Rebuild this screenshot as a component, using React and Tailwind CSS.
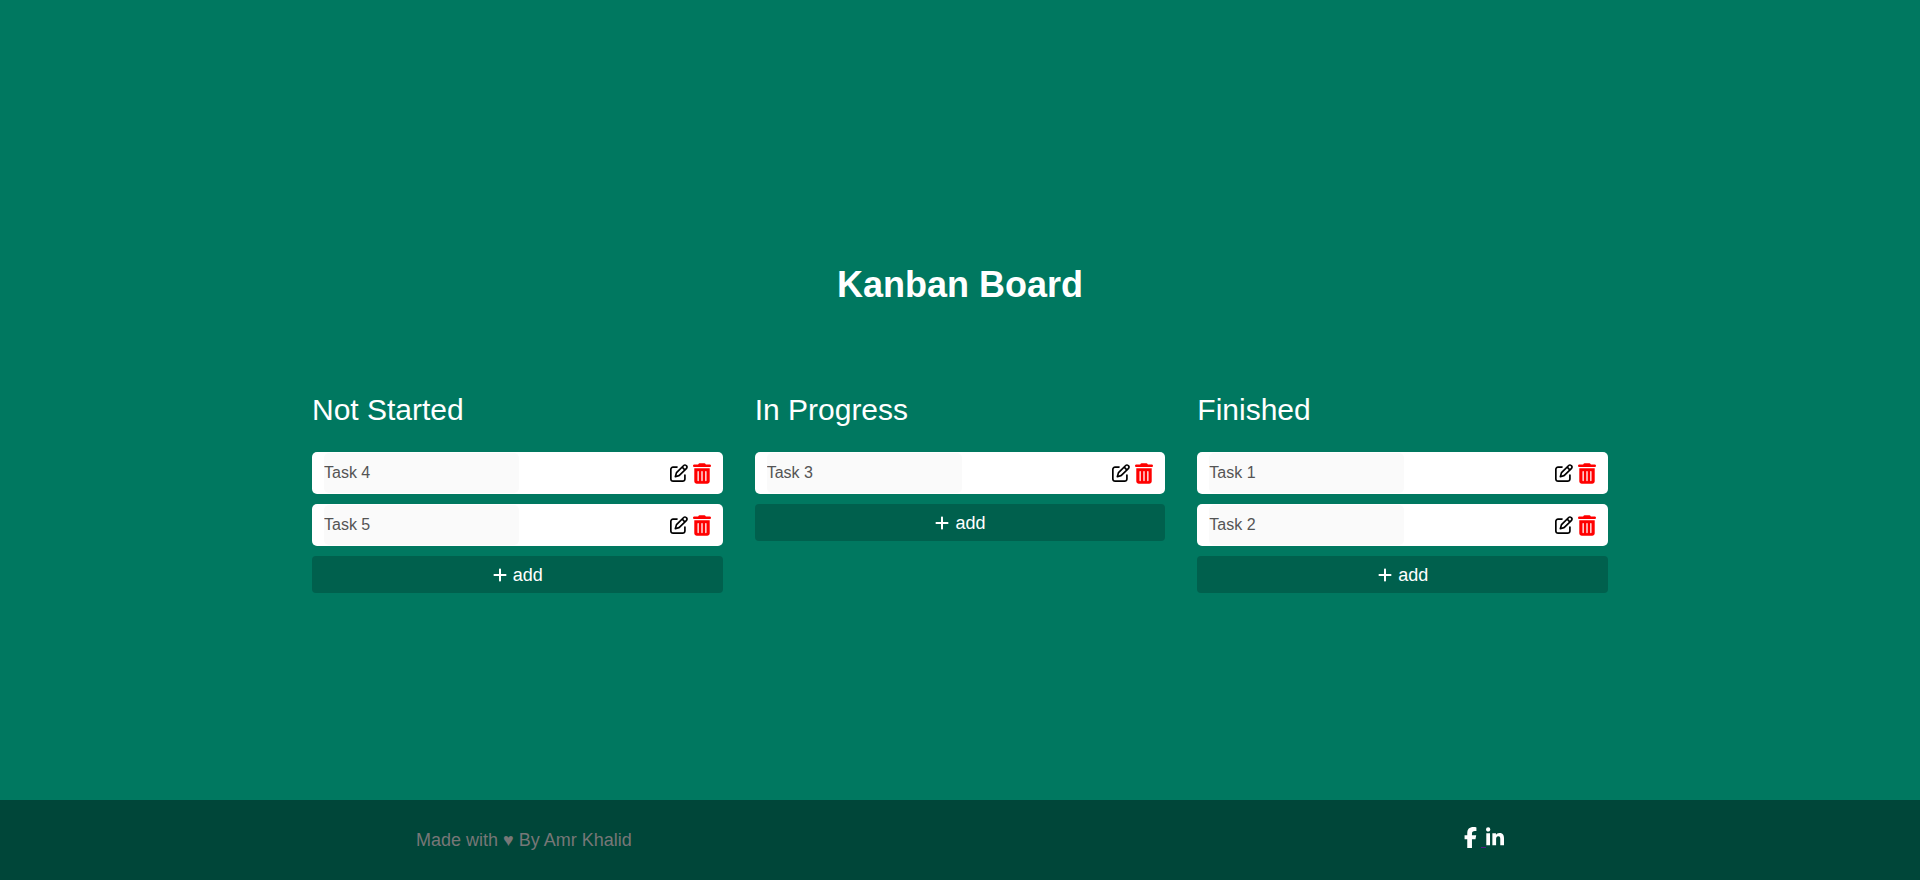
import { FaRegPenToSquare, FaTrashCan, FaPlus, FaFacebookF, FaLinkedinIn } from "react-icons/fa6";

const columns = [
  { title: "Not Started", tasks: ["Task 4", "Task 5"] },
  { title: "In Progress", tasks: ["Task 3"] },
  { title: "Finished", tasks: ["Task 1", "Task 2"] },
];

function Task({ name }) {
  return (
    <li className="flex h-[42px] items-center justify-between rounded-[5px] bg-white px-3">
      <input
        type="text"
        aria-label={name}
        defaultValue={name}
        disabled
        className="h-10 w-[195px] rounded-[5px] bg-[#fafafa] text-base text-[#545454]"
      />
      <div className="flex items-center gap-[5px]">
        <button type="button" aria-label={`Edit ${name}`} className="text-black">
          <FaRegPenToSquare className="size-[18px]" />
        </button>
        <button type="button" aria-label={`Delete ${name}`} className="text-[#ff0000]">
          <FaTrashCan className="h-[21px] w-[18px]" />
        </button>
      </div>
    </li>
  );
}

function Column({ title, tasks }) {
  return (
    <section>
      <h2 className="mb-6 text-[30px] leading-9 text-white">{title}</h2>
      <ul className="flex flex-col gap-2.5">
        {tasks.map((name) => (
          <Task key={name} name={name} />
        ))}
      </ul>
      <button
        type="button"
        className="mt-2.5 flex h-[37px] w-full items-center justify-center gap-[5px] rounded-[4px] bg-[#00604d] text-lg text-white"
      >
        <FaPlus className="size-4" />
        add
      </button>
    </section>
  );
}

export default function App() {
  return (
    <div className="flex min-h-screen flex-col bg-[#007860] font-['Liberation_Sans',Arial,sans-serif]">
      <main className="mx-auto flex w-full max-w-[1296px] flex-1 flex-col justify-center">
        <h1 className="pt-14 pb-[85px] text-center text-4xl leading-11 font-bold text-white">
          Kanban Board
        </h1>
        <div className="grid grid-cols-3 items-start gap-8">
          {columns.map((column) => (
            <Column key={column.title} {...column} />
          ))}
        </div>
      </main>
      <footer className="flex h-20 items-center justify-around bg-[#004639] text-lg text-[#777777]">
        <p>Made with ♥ By Amr Khalid</p>
        <div className="flex items-center">
          <a href="#facebook" aria-label="Facebook" className="whitespace-pre text-[#551a8b] underline">
            <FaFacebookF className="mr-1 inline h-[21px] w-[13px] align-[-2px] text-white" />{" "}
          </a>
          <a href="#linkedin" aria-label="LinkedIn" className="text-[#551a8b]">
            <FaLinkedinIn className="inline h-[21px] w-[18px] align-[-2px] text-white" />
          </a>
        </div>
      </footer>
    </div>
  );
}
